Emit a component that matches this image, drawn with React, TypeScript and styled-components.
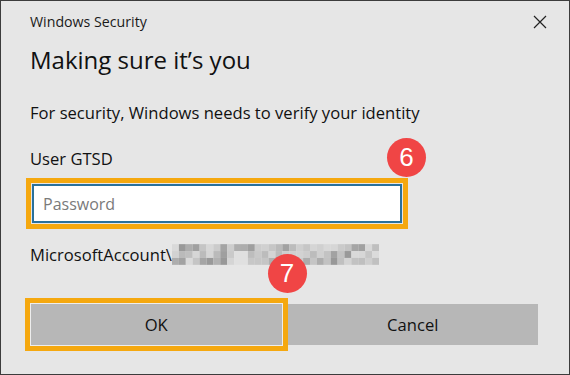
import React from "react";
import styled, { createGlobalStyle } from "styled-components";

const GlobalStyle = createGlobalStyle`
  html, body {
    margin: 0;
    padding: 0;
    background: #e6e6e6;
  }
  * {
    box-sizing: border-box;
  }
`;

const Window = styled.div`
  width: 570px;
  height: 375px;
  background-color: #e6e6e6;
  border: 1px solid #3c3c3c;
  font-family: "Open Sans", "Noto Sans", sans-serif;
  color: #111;
  display: flex;
  flex-direction: column;
  overflow: hidden;
`;

const TitleBar = styled.div`
  height: 41px;
  display: flex;
  align-items: center;
  justify-content: space-between;
  padding: 0 21px 0 29px;
`;

const Caption = styled.span`
  font-size: 14.2px;
  color: #1a1a1a;
`;

const CloseButton = styled.button`
  width: 16px;
  height: 16px;
  padding: 0;
  border: none;
  background: none;
  display: flex;
  align-items: center;
  justify-content: center;
`;

const Body = styled.div`
  padding: 0 31px 0 29px;
  display: flex;
  flex-direction: column;
`;

const Heading = styled.h1`
  margin: 3px 0 0;
  font-size: 24px;
  font-weight: 400;
  line-height: 30px;
  color: #111;
`;

const Text = styled.p<{ gap: number }>`
  margin: ${({ gap }) => gap}px 0 0;
  font-size: 16.6px;
  line-height: 20px;
  color: #111;
  display: flex;
  align-items: center;
`;

const Field = styled.div`
  position: relative;
  width: 370px;
  margin: 15px 0 0 2px;
  outline: 5px solid #f5a80f;
  outline-offset: 1px;
`;

const Input = styled.input`
  display: block;
  width: 100%;
  height: 39px;
  border: 2px solid #2a719c;
  background: #fff;
  padding: 0 9px;
  font-family: inherit;
  font-size: 16px;
  color: #111;

  &::placeholder {
    color: #7a7a7a;
  }
`;

const Badge = styled.span<{ top: number; right: number }>`
  position: absolute;
  top: ${({ top }) => top}px;
  right: ${({ right }) => right}px;
  width: 39px;
  height: 39px;
  border-radius: 50%;
  background-color: #f04545;
  color: #fff;
  font-family: "Liberation Sans", Arial, sans-serif;
  font-size: 26px;
  line-height: 39px;
  text-align: center;
`;

const ButtonRow = styled.div`
  display: grid;
  grid-template-columns: 1fr 1fr;
  gap: 6px;
  margin: 39px 0 0 1px;
`;

const Slot = styled.div<{ highlighted?: boolean }>`
  position: relative;
  outline: ${({ highlighted }) =>
    highlighted ? "5px solid #f5a80f" : "none"};
  outline-offset: 1px;
`;

const DialogButton = styled.button<{ focused?: boolean }>`
  display: block;
  width: 100%;
  height: 41px;
  border: none;
  background-color: #b7b7b7;
  box-shadow: ${({ focused }) =>
    focused ? "0 0 0 1px #ededed" : "none"};
  font-family: inherit;
  font-size: 16.6px;
  color: #111;
`;

const Mosaic: React.FC = () => {
  const cols = 30;
  const rows = 3;
  const cells: React.ReactNode[] = [];
  let seed = 11;
  const rand = () => {
    seed = (seed * 9301 + 49297) % 233280;
    return seed / 233280;
  };
  for (let r = 0; r < rows; r++) {
    for (let c = 0; c < cols; c++) {
      const gapCol = c === 9 || c === 10;
      const dark = rand() < 0.3;
      const v = gapCol && r > 0
        ? 224
        : Math.round(dark ? 150 + rand() * 30 : 185 + rand() * 35);
      cells.push(
        <rect
          key={`${r}-${c}`}
          x={c * 7}
          y={r * 7}
          width={7}
          height={7}
          fill={`rgb(${v},${v},${v})`}
        />
      );
    }
  }
  return (
    <svg width={207} height={21} viewBox="0 0 210 21">
      {cells}
    </svg>
  );
};

const App: React.FC = () => {
  return (
    <Window>
      <GlobalStyle />
      <TitleBar>
        <Caption>Windows Security</Caption>
        <CloseButton aria-label="Close">
          <svg width="14" height="14" viewBox="0 0 14 14">
            <path d="M1 1L13 13M13 1L1 13" stroke="#222" strokeWidth="1.2" />
          </svg>
        </CloseButton>
      </TitleBar>
      <Body>
        <Heading>Making sure it’s you</Heading>
        <Text gap={28}>For security, Windows needs to verify your identity</Text>
        <Text gap={26}>User GTSD</Text>
        <Field>
          <Input type="password" placeholder="Password" />
          <Badge top={-46} right={-24}>6</Badge>
        </Field>
        <Text gap={21}>
          MicrosoftAccount\
          <Mosaic />
        </Text>
        <ButtonRow>
          <Slot highlighted>
            <DialogButton focused>OK</DialogButton>
            <Badge top={-50} right={-25}>7</Badge>
          </Slot>
          <Slot>
            <DialogButton>Cancel</DialogButton>
          </Slot>
        </ButtonRow>
      </Body>
    </Window>
  );
};

export default App;
